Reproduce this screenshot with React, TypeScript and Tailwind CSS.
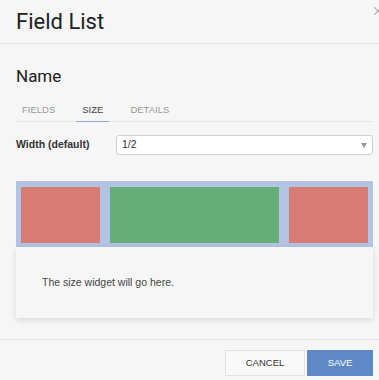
import React from 'react';

const tabs = ['FIELDS', 'SIZE', 'DETAILS'];

export default function App() {
  return (
    <div className="relative w-[379px] h-[380px] overflow-hidden bg-[#f6f6f6] font-['Liberation_Sans',Arial,sans-serif]">
      {/* Header */}
      <div className="h-[44px] border-b border-[#e4e4e4] px-4 flex items-center">
        <h1 className="font-['Roboto',sans-serif] text-[22px] leading-none text-[#222] pt-[1px]">Field List</h1>
      </div>
      {/* close icon, clipped at the window edge */}
      <svg width="8" height="8" viewBox="0 0 8 8" className="absolute left-[374px] top-[7px]">
        <path d="M0 0 L8 8 M8 0 L0 8" stroke="#aaa" strokeWidth="1.2" fill="none" />
      </svg>

      <div className="pl-4 pr-[6px]">
        <h2 className="font-['Roboto',sans-serif] text-[17px] leading-none text-[#222] mt-[24px]">Name</h2>

        {/* Tabs */}
        <div className="mt-[20px] flex border-b border-[#e6e6e6] h-[17px] pl-[6px]">
          {tabs.map((t) => (
            <div
              key={t}
              className={
                t === 'SIZE'
                  ? 'px-[6px] mx-[21px] text-[9.5px] leading-none text-[#444] border-b border-[#8fa6cf] -mb-px'
                  : 'text-[9.5px] leading-none text-[#999]'
              }
            >
              {t}
            </div>
          ))}
        </div>

        {/* Width select */}
        <div className="mt-[13px] flex items-center">
          <label className="w-[100px] text-[10.5px] font-bold text-[#333]">Width (default)</label>
          <div className="flex-1 h-[20px] bg-white border border-[#cfcfcf] rounded-[3px] flex items-center justify-between px-[5px]">
            <span className="text-[10.5px] text-[#333]">1/2</span>
            <svg width="6" height="5" viewBox="0 0 6 5">
              <path d="M0 0 L6 0 L3 5 Z" fill="#999" />
            </svg>
          </div>
        </div>

        {/* Size preview */}
        <div className="mt-[26px] bg-[#b3c3e3] px-[5px] pt-[6px] pb-[4px] flex gap-[10px]">
          <div className="w-[79px] h-[56px] bg-[#d77c74]" />
          <div className="flex-1 h-[56px] bg-[#67ad77]" />
          <div className="w-[79px] h-[56px] bg-[#d77c74]" />
        </div>
        <div className="h-[71px] bg-[#f6f6f6] shadow-[0_2px_6px_rgba(0,0,0,0.12)] flex items-center px-[26px]">
          <p className="text-[10.5px] text-[#444]">The size widget will go here.</p>
        </div>
      </div>

      {/* Footer */}
      <div className="absolute left-0 right-0 top-[339px] border-t border-[#e6e6e6] flex justify-end gap-[2px] px-[6px] pt-[10px]">
        <button className="w-[80px] h-[26px] bg-[#f8f8f8] border border-[#e2e2e2] text-[9.5px] text-[#333]">CANCEL</button>
        <button className="w-[66px] h-[26px] bg-[#5d8ac7] text-[9.5px] text-white">SAVE</button>
      </div>
    </div>
  );
}
